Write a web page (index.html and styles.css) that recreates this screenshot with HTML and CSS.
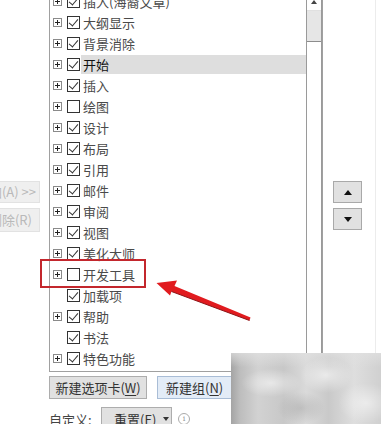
FILE: index.html
```html
<!DOCTYPE html>
<html lang="zh-CN">
<head>
<meta charset="utf-8">
<link rel="stylesheet" href="styles.css">
</head>
<body>
<div class="dialog">
  <div class="top">
    <div class="left-col">
      <div class="side-btn btn-add">添加(A) &gt;&gt;</div>
      <div class="side-btn btn-del">&lt;&lt; 删除(R)</div>
    </div>
    <div class="listbox">
      <div class="tree">
        <div class="row"><span class="exp"></span><span class="cb on"></span><span class="label">插入(海裔文章)</span></div>
        <div class="row"><span class="exp"></span><span class="cb on"></span><span class="label">大纲显示</span></div>
        <div class="row"><span class="exp"></span><span class="cb on"></span><span class="label">背景消除</span></div>
        <div class="row sel"><span class="exp"></span><span class="cb on"></span><span class="label">开始</span></div>
        <div class="row"><span class="exp"></span><span class="cb on"></span><span class="label">插入</span></div>
        <div class="row"><span class="exp"></span><span class="cb"></span><span class="label">绘图</span></div>
        <div class="row"><span class="exp"></span><span class="cb on"></span><span class="label">设计</span></div>
        <div class="row"><span class="exp"></span><span class="cb on"></span><span class="label">布局</span></div>
        <div class="row"><span class="exp"></span><span class="cb on"></span><span class="label">引用</span></div>
        <div class="row"><span class="exp"></span><span class="cb on"></span><span class="label">邮件</span></div>
        <div class="row"><span class="exp"></span><span class="cb on"></span><span class="label">审阅</span></div>
        <div class="row"><span class="exp"></span><span class="cb on"></span><span class="label">视图</span></div>
        <div class="row"><span class="exp"></span><span class="cb on"></span><span class="label">美化大师</span></div>
        <div class="row"><span class="exp"></span><span class="cb"></span><span class="label">开发工具</span></div>
        <div class="row"><span class="noexp"></span><span class="cb on"></span><span class="label">加载项</span></div>
        <div class="row"><span class="exp"></span><span class="cb on"></span><span class="label">帮助</span></div>
        <div class="row"><span class="noexp"></span><span class="cb on"></span><span class="label">书法</span></div>
        <div class="row"><span class="exp"></span><span class="cb on"></span><span class="label">特色功能</span></div>
      </div>
      <div class="scrollbar">
        <div class="sb-up"><span class="tri-up"></span></div>
        <div class="sb-thumb"></div>
      </div>
    </div>
    <div class="right-col">
      <div class="move-group">
        <div class="move-btn"><span class="tri-up"></span></div>
        <div class="move-btn"><span class="tri-down"></span></div>
      </div>
    </div>
  </div>
  <div class="bottom">
    <div class="btn-row">
      <div class="btn">新建选项卡(<u>W</u>)</div>
      <div class="btn btn-default">新建组(<u>N</u>)</div>
    </div>
    <div class="custom-row">
      <span class="custom-label">自定义:</span>
      <div class="btn btn-reset">重置(E)<span class="tri-down small"></span></div>
      <span class="info">i</span>
    </div>
  </div>

  <div class="highlight-box"></div>
  <svg class="arrow" width="381" height="424" viewBox="0 0 381 424">
    <polygon points="156.5,283 177,280.5 174.5,286 250.5,317.5 249.5,320.5 171.5,291.5 170,295.5" fill="#e11b1f"/>
    <polyline points="171.5,291.5 249.5,320.5" fill="none" stroke="#8e1417" stroke-width="1"/>
  </svg>
  <div class="mosaic"></div>
</div>
</body>
</html>
```

FILE: styles.css
```css
html, body {
  margin: 0;
  padding: 0;
  background: #ffffff;
}

body {
  width: 381px;
  height: 424px;
  overflow: hidden;
  font-family: "Noto Sans CJK SC", "Microsoft YaHei", sans-serif;
  font-size: 13px;
  color: #3a3a3a;
}

.dialog {
  position: relative;
  width: 381px;
  height: 424px;
  overflow: hidden;
  display: flex;
  flex-direction: column;
}

.top {
  display: flex;
  height: 372px;
  flex: none;
}

/* left column with clipped buttons */
.left-col {
  width: 49px;
  flex: none;
  display: flex;
  flex-direction: column;
  gap: 5px;
  padding-top: 181px;
  box-sizing: border-box;
}

.side-btn {
  margin-left: -60px;
  width: 100px;
  height: 22px;
  box-sizing: border-box;
  background: #efefef;
  border: 1px solid #e2e2e2;
  color: #b9b9b9;
  font-size: 13px;
  line-height: 20px;
  text-align: right;
  padding-right: 3px;
  white-space: nowrap;
}

.btn-del {
  height: 24px;
  line-height: 22px;
  padding-right: 7px;
}

/* list box */
.listbox {
  width: 274px;
  flex: none;
  display: flex;
  border-left: 1px solid #a0a0a0;
  border-right: 1px solid #a0a0a0;
  border-bottom: 1px solid #a0a0a0;
  box-sizing: border-box;
  background: #fff;
}

.tree {
  flex: 1;
  display: flex;
  flex-direction: column;
  margin-top: -9px;
  padding-left: 3px;
}

.row {
  height: 21px;
  flex: none;
  display: flex;
  align-items: center;
}

.exp, .noexp {
  width: 9px;
  height: 9px;
  flex: none;
  margin-right: 5px;
  box-sizing: border-box;
}

.exp {
  position: relative;
  border: 1px solid #8a8a8a;
}

.exp::before {
  content: "";
  position: absolute;
  left: 1px;
  top: 3px;
  width: 5px;
  height: 1px;
  background: #222;
}

.exp::after {
  content: "";
  position: absolute;
  left: 3px;
  top: 1px;
  width: 1px;
  height: 5px;
  background: #222;
}

.cb {
  width: 13px;
  height: 13px;
  flex: none;
  box-sizing: border-box;
  border: 1px solid #333;
  background: #fff;
  margin-right: 1px;
  position: relative;
}

.cb.on::after {
  content: "";
  position: absolute;
  left: 3px;
  top: 0px;
  width: 4px;
  height: 8px;
  border-right: 1.4px solid #333;
  border-bottom: 1.4px solid #333;
  transform: rotate(40deg);
}

.label {
  flex: 1;
  height: 19px;
  line-height: 19px;
  padding-left: 2px;
  white-space: nowrap;
  color: #4a4a4a;
}

.row.sel .label {
  background: #dedede;
  color: #111;
}

/* scrollbar */
.scrollbar {
  width: 16px;
  flex: none;
  box-sizing: border-box;
  border-left: 1px solid #9a9a9a;
  border-right: 1px solid #9a9a9a;
  display: flex;
  flex-direction: column;
}

.sb-up {
  height: 8px;
  display: flex;
  align-items: flex-start;
  justify-content: center;
}

.sb-up .tri-up {
  border-left-width: 3.5px;
  border-right-width: 3.5px;
  border-bottom-width: 4px;
  border-bottom-color: #444;
}

.sb-thumb {
  margin-top: 2px;
  height: 32px;
  background: #e6e6e6;
  border-top: 1px solid #e0e0e0;
  border-bottom: 1px solid #8d8d8d;
  box-sizing: border-box;
}

/* right column */
.right-col {
  width: 53px;
  flex: none;
  border-right: 1px solid #ececec;
  box-sizing: border-box;
  padding-top: 181px;
  padding-left: 10px;
}

.move-group {
  display: flex;
  flex-direction: column;
  gap: 5px;
  width: 29px;
}

.move-btn {
  height: 22px;
  box-sizing: border-box;
  background: #e1e1e1;
  border: 1px solid #a9a9a9;
  display: flex;
  align-items: center;
  justify-content: center;
}

.tri-up {
  width: 0;
  height: 0;
  border-left: 4px solid transparent;
  border-right: 4px solid transparent;
  border-bottom: 5px solid #111;
}

.tri-down {
  width: 0;
  height: 0;
  border-left: 4px solid transparent;
  border-right: 4px solid transparent;
  border-top: 5px solid #111;
}

.tri-down.small {
  margin-left: 7px;
  border-left-width: 3.5px;
  border-right-width: 3.5px;
  border-top-width: 4px;
  border-top-color: #333;
}

/* bottom */
.bottom {
  padding-left: 49px;
  padding-top: 4px;
  display: flex;
  flex-direction: column;
  gap: 9px;
}

.btn-row {
  display: flex;
  gap: 10px;
}

.btn {
  height: 23px;
  box-sizing: border-box;
  background: #e1e1e1;
  border: 1px solid #adadad;
  color: #333;
  font-size: 13px;
  line-height: 21px;
  padding: 0 8px;
  white-space: nowrap;
  display: flex;
  align-items: center;
}

.btn:first-child {
  width: 98px;
  justify-content: center;
}

.btn-default {
  width: 80px;
  background: #e3ecf7;
  border-color: #a9bdd6;
}

.btn u {
  text-decoration: underline;
  text-underline-offset: 2px;
}

.custom-row {
  display: flex;
  align-items: center;
  height: 22px;
}

.custom-label {
  width: 52px;
  color: #444;
}

.btn-reset {
  width: 71px;
  height: 24px;
  padding-left: 12px;
}

.info {
  margin-left: 6px;
  width: 10px;
  height: 10px;
  border: 1px solid #aaa;
  border-radius: 50%;
  font-size: 8px;
  line-height: 10px;
  text-align: center;
  color: #999;
  font-family: "DejaVu Serif", serif;
}

/* overlays */
.highlight-box {
  position: absolute;
  left: 40px;
  top: 259px;
  width: 106px;
  height: 29px;
  box-sizing: border-box;
  border: 2px solid #c3272d;
}

.arrow {
  position: absolute;
  left: 0;
  top: 0;
  pointer-events: none;
}

.mosaic {
  position: absolute;
  left: 231px;
  top: 353px;
  width: 150px;
  height: 71px;
  background:
    radial-gradient(ellipse 30px 14px at 40px 30px, rgba(255,255,255,0.55), rgba(255,255,255,0) 100%),
    radial-gradient(ellipse 26px 18px at 95px 22px, rgba(255,255,255,0.6), rgba(255,255,255,0) 100%),
    radial-gradient(ellipse 24px 16px at 70px 55px, rgba(120,120,120,0.25), rgba(120,120,120,0) 100%),
    radial-gradient(ellipse 28px 20px at 135px 50px, rgba(255,255,255,0.5), rgba(255,255,255,0) 100%),
    linear-gradient(180deg, rgba(225,225,225,0.7) 0, rgba(225,225,225,0) 20%),
    linear-gradient(90deg, #a4a4a4 0, #bdbdbd 6%, #d2d2d2 18%, #c8c8c8 35%, #dadada 50%, #c9c9c9 65%, #dedede 82%, #d0d0d0 100%);
}
```
